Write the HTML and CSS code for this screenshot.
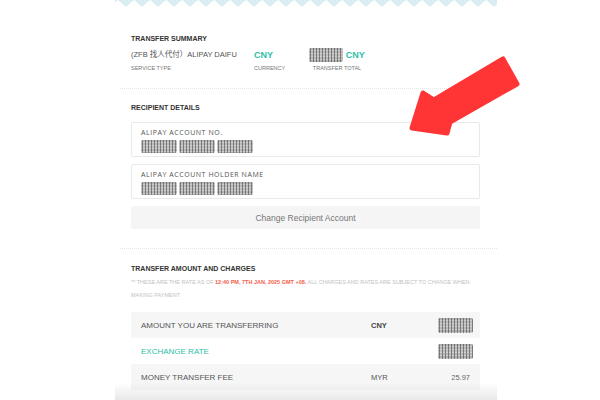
FILE: index.html
```html
<!DOCTYPE html>
<html>
<head>
  <meta name="viewport" content="width=device-width, initial-scale=1.0">
  <title>Transfer Summary</title>
  <link rel="stylesheet" href="styles.css">
</head>
<body>
  <!-- Receipt card -->
  <div class="card">
    <svg class="zigzag" width="382" height="7">
      <defs>
        <pattern id="zz" width="16" height="7" patternUnits="userSpaceOnUse" x="3">
          <polygon points="0,0 16,0 8,7" fill="#d9eef3"/>
        </pattern>
      </defs>
      <rect width="382" height="7" fill="url(#zz)"/>
    </svg>

    <!-- Transfer summary -->
    <div class="section summary">
      <h3 class="heading">TRANSFER SUMMARY</h3>
      <div class="summary-row">
        <div class="col col-service">
          <div class="value">(ZFB 找人代付）ALIPAY DAIFU</div>
          <div class="caption">SERVICE TYPE</div>
        </div>
        <div class="col col-currency">
          <div class="value teal">CNY</div>
          <div class="caption">CURRENCY</div>
        </div>
        <div class="col col-total">
          <div class="value teal"><span class="blur blur-total"></span> CNY</div>
          <div class="caption">TRANSFER TOTAL</div>
        </div>
      </div>
    </div>
    <div class="divider"></div>

    <!-- Recipient details -->
    <div class="section recipient">
      <h3 class="heading">RECIPIENT DETAILS</h3>
      <div class="field">
        <div class="field-label">ALIPAY ACCOUNT NO.</div>
        <div class="field-value"><span class="blur"></span><span class="blur"></span><span class="blur"></span></div>
      </div>
      <div class="field">
        <div class="field-label">ALIPAY ACCOUNT HOLDER NAME</div>
        <div class="field-value"><span class="blur"></span><span class="blur"></span><span class="blur"></span></div>
      </div>
      <button class="change-btn">Change Recipient Account</button>
    </div>
    <div class="divider"></div>

    <!-- Amount and charges -->
    <div class="section charges">
      <h3 class="heading">TRANSFER AMOUNT AND CHARGES</h3>
      <div class="note">
        <div class="note-line"><span>** THESE ARE THE RATE AS OF</span> <span class="note-time">12:40 PM, 7TH JAN, 2025 GMT +08.</span> <span>ALL CHARGES AND RATES ARE SUBJECT TO CHANGE WHEN</span></div>
        <div class="note-line">MAKING PAYMENT</div>
      </div>
      <div class="charge-table">
        <div class="charge-row shaded">
          <span class="charge-name">AMOUNT YOU ARE TRANSFERRING</span>
          <span class="charge-cur bold">CNY</span>
          <span class="charge-amt"><span class="blur blur-amt"></span></span>
        </div>
        <div class="charge-row">
          <span class="charge-name teal-text">EXCHANGE RATE</span>
          <span class="charge-cur"></span>
          <span class="charge-amt"><span class="blur blur-amt"></span></span>
        </div>
        <div class="charge-row shaded">
          <span class="charge-name">MONEY TRANSFER FEE</span>
          <span class="charge-cur">MYR</span>
          <span class="charge-amt">25.97</span>
        </div>
      </div>
    </div>
  </div>

  <!-- Pointer arrow -->
  <svg class="arrow" width="130" height="95" viewBox="0 0 130 95">
    <polygon points="12,78 23,43 34,50 103,9 117,34 50,72 47,83"
             fill="#ff3535" stroke="#ff3535" stroke-width="5" stroke-linejoin="round"/>
  </svg>
</body>
</html>
```

FILE: styles.css
```css
body {
  margin: 0;
  padding: 0;
  background-color: #ffffff;
  font-family: "Liberation Sans", Arial, "Noto Sans CJK SC", sans-serif;
  color: #555;
}
.card {
  position: relative;
  width: 382px;
  height: 400px;
  margin-left: 115px;
  overflow: hidden;
  background-color: #ffffff;
}
/* soft fade at the bottom of the card */
.card::after {
  content: "";
  position: absolute;
  left: 0;
  right: 0;
  bottom: 0;
  height: 17px;
  background: linear-gradient(to bottom, rgba(0, 0, 0, 0), rgba(0, 0, 0, 0.09));
}
.zigzag {
  display: block;
}
.section {
  padding: 0 17px 0 16px;
}
.divider {
  margin-left: 5px;
  border-top: 1px dotted #e6e6e6;
}
.heading {
  margin: 0;
  font-size: 7px;
  line-height: 10px;
  font-weight: bold;
  color: #333;
}
.summary {
  padding-top: 27px;
  padding-bottom: 16px;
}
.summary-row {
  display: flex;
  margin-top: 4px;
}
.col-service {
  width: 123px;
}
.col-currency {
  width: 55px;
}
.col-total {
  width: 56px;
  text-align: center;
}
.value {
  height: 14px;
  line-height: 14px;
  font-size: 7.5px;
  color: #555;
  white-space: nowrap;
}
.value.teal {
  font-size: 9px;
  font-weight: bold;
  color: #2cc0a6;
}
.caption {
  margin-top: 2px;
  font-size: 5.5px;
  line-height: 8px;
  color: #777;
  white-space: nowrap;
}
/* blurred-out values */
.blur {
  display: inline-block;
  width: 36px;
  height: 13px;
  margin-right: 2px;
  vertical-align: top;
  background-color: #cdcdcd;
  background-image:
    radial-gradient(circle, rgba(80, 80, 80, 0.7) 0.6px, transparent 1.3px),
    radial-gradient(circle, rgba(240, 240, 240, 0.9) 0.6px, transparent 1.2px),
    linear-gradient(to bottom, #bdbdbd, #d6d6d6 50%, #b8b8b8);
  background-size: 3px 2px, 2px 3px, 100% 100%;
  background-position: 0 0, 1px 1px, 0 0;
  border-radius: 2px;
}
.blur-total {
  width: 34px;
  height: 14px;
  margin-right: 0;
}
.recipient {
  padding-top: 14px;
  padding-bottom: 19px;
}
.field {
  margin-top: 9px;
  padding: 5px 9px 3px;
  border: 1px solid #e9e9e9;
  border-radius: 2px;
}
.field + .field {
  margin-top: 7px;
}
.field-label {
  font-family: "Open Sans", "Liberation Sans", sans-serif;
  font-size: 7px;
  line-height: 10px;
  letter-spacing: 0.55px;
  color: #555;
}
.field-value {
  margin-top: 2px;
  height: 13px;
  display: flex;
}
.change-btn {
  display: block;
  width: 100%;
  height: 23px;
  margin-top: 7px;
  padding: 0;
  border: none;
  border-radius: 2px;
  background-color: #f5f5f5;
  color: #777;
  font-family: "Liberation Sans", Arial, sans-serif;
  font-size: 8.5px;
}
.charges {
  padding-top: 15px;
}
.note {
  margin-top: 2px;
  font-size: 5.5px;
  line-height: 13px;
  color: #c2c2c2;
}
.note-line {
  white-space: nowrap;
}
.note-time {
  color: #f3604c;
  font-weight: bold;
}
.charge-table {
  margin-top: 10px;
}
.charge-row {
  display: grid;
  grid-template-columns: 230px 60px 1fr;
  align-items: center;
  height: 26px;
  padding: 0 10px;
  font-size: 8px;
  color: #555;
}
.charge-row.shaded {
  background-color: #f6f6f6;
}
.charge-cur {
  font-size: 7.5px;
}
.charge-cur.bold {
  font-weight: bold;
  color: #444;
}
.charge-amt {
  text-align: right;
  font-size: 7.5px;
  color: #666;
}
.blur-amt {
  width: 35px;
  height: 15px;
  margin-right: -3px;
}
.teal-text {
  color: #2cc0a6;
}
.arrow {
  position: absolute;
  left: 400px;
  top: 50px;
}
```
